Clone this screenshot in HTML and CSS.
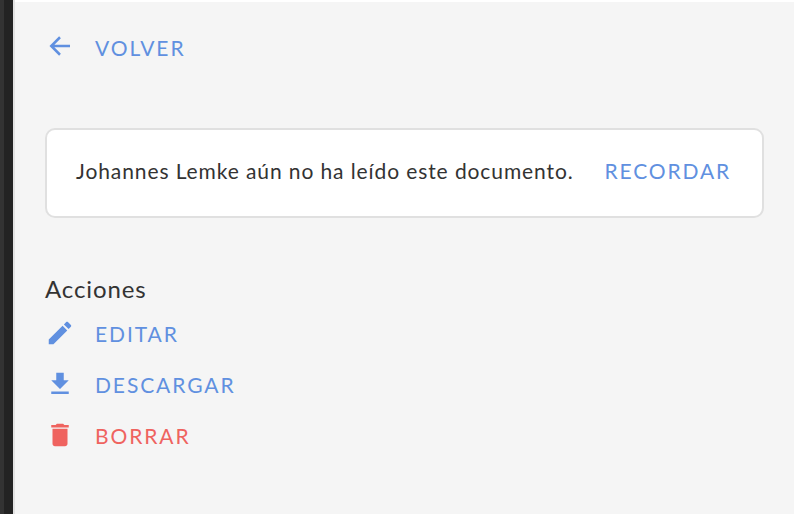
FILE: index.html
```html
<!DOCTYPE html>
<html lang="es">

<head>
  <meta charset="UTF-8">
  <title>Documento</title>
  <link rel="stylesheet" href="styles.css">
</head>

<body>
  <div class="sidebar"></div>
  <main class="panel">
    <a class="action back" href="#">
      <span class="action-icon">
        <svg width="30" height="30" viewBox="0 0 24 24"><path class="arrow" d="M20 12H5M12 5l-7 7 7 7"/></svg>
      </span>
      VOLVER
    </a>

    <div class="notice">
      <p class="notice-text">Johannes Lemke aún no ha leído este documento.</p>
      <a class="notice-link" href="#">RECORDAR</a>
    </div>

    <h2 class="section-title">Acciones</h2>
    <ul class="action-list">
      <li>
        <a class="action" href="#">
          <span class="action-icon">
            <svg width="30" height="30" viewBox="0 0 24 24"><path d="M3 17.25V21h3.75L17.81 9.94l-3.75-3.75L3 17.25zM20.71 7.04c.39-.39.39-1.02 0-1.41l-2.34-2.34c-.39-.39-1.02-.39-1.41 0l-1.83 1.83 3.75 3.75 1.83-1.83z"/></svg>
          </span>
          EDITAR
        </a>
      </li>
      <li>
        <a class="action" href="#">
          <span class="action-icon">
            <svg width="30" height="30" viewBox="0 0 24 24"><path d="M19 9h-4V3H9v6H5l7 7 7-7zM5 18v2h14v-2H5z"/></svg>
          </span>
          DESCARGAR
        </a>
      </li>
      <li>
        <a class="action danger" href="#">
          <span class="action-icon">
            <svg width="30" height="30" viewBox="0 0 24 24"><path d="M6 19c0 1.1.9 2 2 2h8c1.1 0 2-.9 2-2V7H6v12zM19 4h-3.5l-1-1h-5l-1 1H5v2h14V4z"/></svg>
          </span>
          BORRAR
        </a>
      </li>
    </ul>
  </main>
</body>

</html>
```

FILE: styles.css
```css
html,
body {
  height: 100%;
}

body {
  display: flex;
  margin: 0;
  background-color: #f5f5f5;
  color: #333;
  font-family: Lato, "Noto Sans", sans-serif;
  overflow: hidden;
}

a {
  text-decoration: none;
}

.sidebar {
  flex: none;
  width: 13px;
  background-color: #232323;
  background-image: linear-gradient(to right, #333 4px, #232323 4px);
  border-right: 2px solid #e2e2e2;
}

.panel {
  flex: 1;
  padding: 30px 30px 0;
  border-top: 2px solid #fff;
}

.action {
  display: flex;
  align-items: center;
  height: 30px;
  color: #6090e0;
  font-size: 21px;
  letter-spacing: 1.9px;
}

.action-icon {
  display: flex;
  justify-content: center;
  width: 30px;
  margin-right: 20px;
}

.back .action-icon {
  margin-bottom: 2px;
}

.action-icon svg {
  fill: currentColor;
}

.action-icon .arrow {
  fill: none;
  stroke: currentColor;
  stroke-width: 2;
}

.danger {
  color: #ef635f;
}

.notice {
  display: flex;
  align-items: center;
  justify-content: space-between;
  height: 81px;
  margin-top: 66px;
  padding: 0 31px 5px 29px;
  background-color: #fff;
  border: 2px solid #e0e0e0;
  border-radius: 10px;
}

.notice-text {
  margin: 0;
  font-size: 21px;
  letter-spacing: .9px;
}

.notice-link {
  color: #6090e0;
  font-size: 21px;
  letter-spacing: 1.85px;
}

.section-title {
  margin: 55px 0 0;
  font-size: 24px;
  font-weight: 400;
  line-height: 32px;
  letter-spacing: .9px;
}

.action-list {
  margin: 13px 0 0;
  padding: 0;
  list-style: none;
}

.action-list li {
  margin-bottom: 21px;
}
```
